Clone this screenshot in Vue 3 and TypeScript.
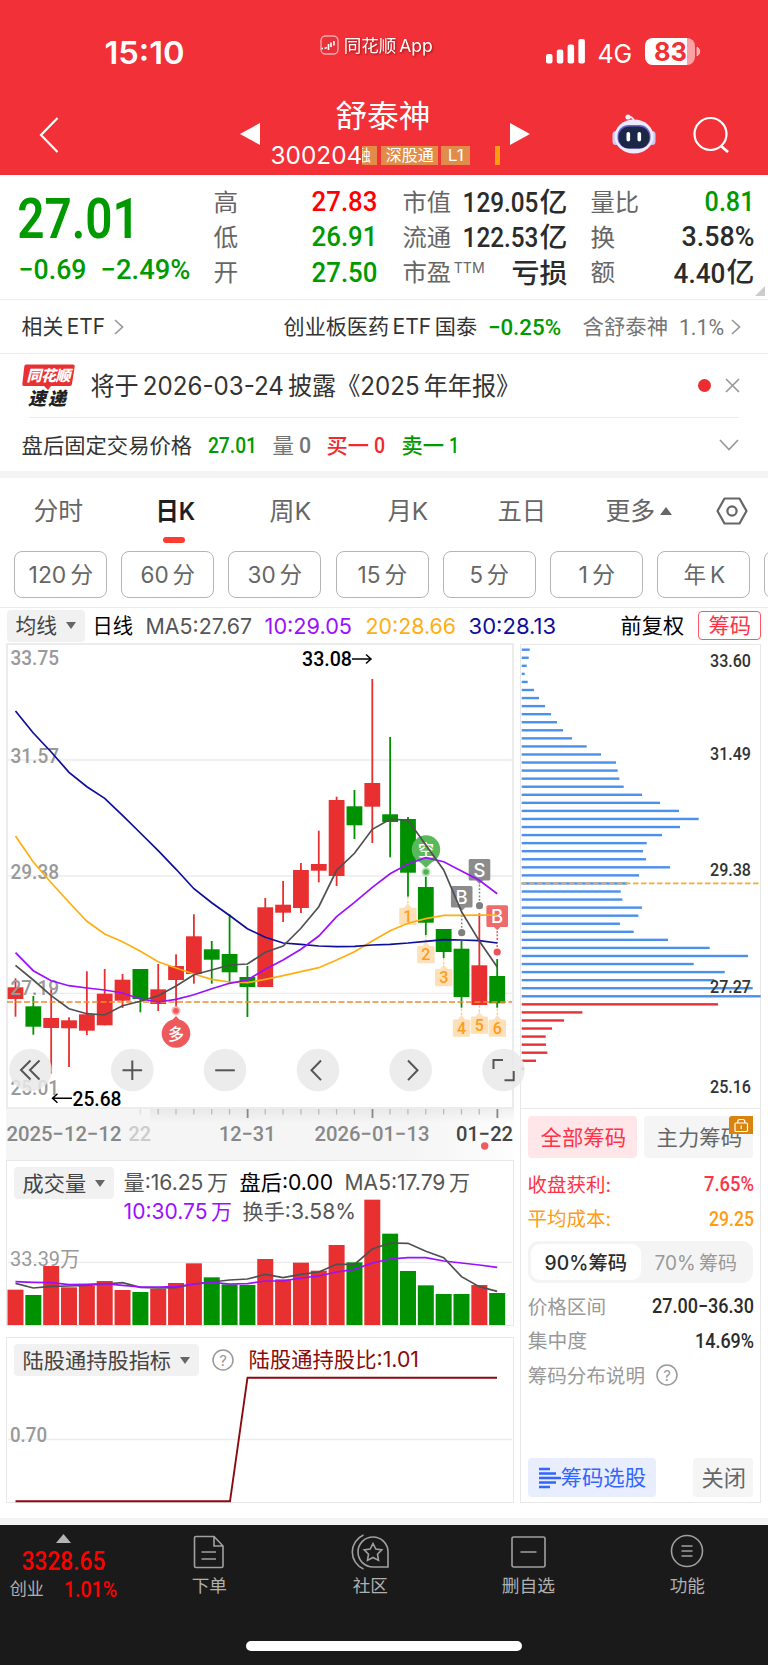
<script setup lang="ts">
import { h, type FunctionalComponent } from 'vue'

interface LabelProps {
  t: string
  w: number
  s: number
  g?: number
  wt?: number
  din?: boolean
  sp?: boolean
  dy?: number
}

/* Splits a label where Han characters meet Latin letters or digits. */
const splitScripts = (t: string): string[] =>
  t.split(/(?<=[\u4e00-\u9fff])(?=[A-Za-z0-9])|(?<=[A-Za-z0-9%])(?=[\u4e00-\u9fff])/)

/* Single-line label fitted to a fixed ink width; `g` is the leading gap. */
const T: FunctionalComponent<LabelProps> = (p) => {
  const gap = p.g ?? 0
  const lead = p.s * (p.din ? 0.05 : 0.02)
  const tail = p.s * 0.05
  const height = Math.round(p.s * 1.3)
  const parts = p.sp ? splitScripts(p.t) : [p.t]
  return h('svg', { width: gap + p.w, height, overflow: 'visible' }, [
    h(
      'text',
      {
        x: gap - lead,
        y: height / 2 + p.s * 0.365 + (p.dy ?? 0),
        textLength: p.w + lead + tail,
        lengthAdjust: 'spacingAndGlyphs',
        'font-size': p.s,
        'font-weight': p.wt ?? (p.din ? 500 : 400),
        'font-family': p.din
          ? 'Roboto, "Noto Sans CJK SC", sans-serif'
          : 'Inter, "Noto Sans CJK SC", sans-serif',
        fill: 'currentColor',
      },
      parts.length > 1
        ? parts.map((part, i) => h('tspan', i ? { dx: p.s * 0.17 } : {}, part))
        : p.t,
    ),
  ])
}
T.props = { t: String, w: Number, s: Number, g: Number, wt: Number, din: Boolean, sp: Boolean, dy: Number } as any

const RED = '#e83030'
const GREEN = '#009100'
const cx = (i: number): number => 15.5 + 17.84 * i

type Candle = [up: number, top: number, bottom: number, high: number, low: number]
const candles: Candle[] = [
  [1, 987.3, 999, 978.3, 1016.7],
  [0, 1006.3, 1026.7, 996, 1034.7],
  [1, 1018, 1028, 989.3, 1073.7],
  [1, 1020.3, 1028.3, 1017.3, 1067],
  [1, 1014.3, 1030.7, 971.3, 1035],
  [1, 993.7, 1025.3, 969, 1025.3],
  [1, 979.7, 1000.7, 974, 1008],
  [0, 969, 999, 969, 1012.3],
  [1, 989.3, 1004, 964, 1011],
  [1, 966, 980, 954.3, 1007.3],
  [1, 936.3, 974, 914.3, 983.7],
  [0, 949.3, 959.7, 941, 983.7],
  [0, 954, 972.3, 914.3, 982.7],
  [0, 977, 987, 966, 1017],
  [1, 907.3, 987, 898, 987],
  [1, 904.7, 912.7, 881, 922],
  [1, 870, 908, 863, 913],
  [1, 864, 870.7, 830.7, 882.3],
  [1, 800, 876, 796.7, 886],
  [0, 806.3, 825.3, 790, 839],
  [1, 783, 806.7, 679, 843],
  [0, 814.3, 822, 737, 857.3],
  [0, 819, 872.7, 817, 896.7],
  [0, 887, 922.7, 876.7, 935],
  [0, 929, 952, 929, 958],
  [0, 948.7, 997, 940.7, 1007.7],
  [1, 965.3, 1005, 913.3, 1005],
  [0, 976, 1003.3, 959, 1007.7],
]

const line = (ys: number[]): string => ys.map((y, i) => `${cx(i).toFixed(1)},${y}`).join(' ')

const averages = [
  {
    color: '#ffae12',
    pts: line([836, 862, 882.7, 902.3, 921.3, 934, 941.7, 951.3, 961.7, 968, 974, 979.3, 982, 982.7, 979.3, 975.7, 971.7, 967.7, 960, 951.7, 941, 930.7, 923.3, 918.7, 915.3, 915.3, 915.2, 915]),
  },
  {
    color: '#0e0e9c',
    pts: line([711, 733, 752, 772.3, 786.7, 798.3, 815.3, 833, 850.7, 869.3, 888.7, 902.7, 915.5, 928.7, 937.3, 943, 944.3, 946, 946.7, 946.3, 945, 944.3, 943, 941.3, 939.7, 940, 940.7, 943]),
  },
  {
    color: '#9a10ff',
    pts: line([952.7, 970.7, 980.7, 985.7, 988, 990, 993, 999, 1002, 999.3, 994.7, 988.7, 983.3, 980, 969.3, 960, 949.3, 936, 916.7, 902.3, 887.3, 873.7, 864, 857.7, 861.7, 871, 880.3, 893.7]),
  },
  {
    color: '#505050',
    pts: line([965.3, 980, 995.7, 1008.7, 1013.7, 1015, 1005.7, 1001.3, 995.7, 986, 974.7, 970, 965, 964, 952.3, 946, 928.3, 906.7, 870.3, 853.3, 829.3, 819.3, 820, 845, 870, 911.7, 941, 967]),
  },
]

const priceLabels = [
  { t: '33.75', y: 664.5 },
  { t: '31.57', y: 762.7 },
  { t: '29.38', y: 879.3 },
  { t: '27.19', y: 995.3 },
  { t: '25.01', y: 1094.5 },
]

const countTags = [
  { n: 1, x: 407.9, y: 907.7 },
  { n: 2, x: 425.9, y: 946 },
  { n: 3, x: 443.7, y: 969 },
  { n: 4, x: 461.5, y: 1019.5 },
  { n: 5, x: 479.4, y: 1016.5 },
  { n: 6, x: 497.3, y: 1019.5 },
]

const tradeTags = [
  { t: 'S', x: 479.5, y: 859, dot: 905.7, color: '#8c8c8c', dark: '#808080' },
  { t: 'B', x: 461.7, y: 886, dot: 932.7, color: '#8c8c8c', dark: '#808080' },
  { t: 'B', x: 497.2, y: 905.3, dot: 952, color: '#f06a6c', dark: '#ee5056' },
]

const controls = [
  { x: 30.5, d: 'M30.5 1060.5l-9.5 9.5l9.5 9.5M39.5 1060.5l-9.5 9.5l9.5 9.5' },
  { x: 132.3, d: 'M122.5 1070.3h19.6M132.3 1060.5v19.6' },
  { x: 225, d: 'M215.2 1070.3h19.6' },
  { x: 318, d: 'M321 1060.5l-9.5 9.8l9.5 9.8' },
  { x: 410.7, d: 'M408 1060.5l9.5 9.8l-9.5 9.8' },
  { x: 503.5, d: 'M493.5 1069v-9h9.5M504.500 1080.200h9.200v-9.200' },
]

const ticks = Array.from({ length: 21 }, (_, k) => k + 7)

const volY = (v: number): number => 1150 + v / 3
const volumes = [419, 435, 348, 412, 407, 393, 420, 426, 416, 399, 340, 382, 403, 405, 327, 388, 338, 362, 285, 337, 149, 251, 363, 406, 432, 432, 405, 429].map(volY)
const vol5 = line([400, 414, 409, 408, 406, 402, 398, 412, 414, 413, 402, 396, 390, 387, 373, 383, 373, 366, 343, 343, 297, 279, 280, 304, 323, 380, 410, 424].map(volY))
const vol10 = line([395, 397, 398, 404, 403, 401, 406, 411, 411, 410, 402, 397, 402, 401, 393, 393, 384, 378, 366, 358, 339, 327, 323, 323, 333, 339, 345, 352].map(volY))

const chips = [
  449, 446, 440, 434, 443, 462, 477, 495, 513, 531, 549, 576, 620, 663, 708, 713, 718, 731, 786, 840, 897, 956, 900, 846, 800,
  789, 798, 870, 777, 742, 722, 727, 786, 775, 720, 761, 864, 989, 1104, 941, 1034, 1003, 1118, 1142, 1014, 607, 552, 516, 497,
  498, 502, 468, 432,
].map((end, i) => ({ y: 649.7 + 8.06 * i, w: (end - 425) / 3, color: i < 44 ? '#4a90ec' : '#e83038' }))

const chipLabels = [
  { t: '33.60', y: 667 },
  { t: '31.49', y: 760.3 },
  { t: '29.38', y: 876.4 },
  { t: '27.27', y: 992.8 },
  { t: '25.16', y: 1093 },
]

const periods = [
  { t: '120分', w: 63 },
  { t: '60分', w: 53 },
  { t: '30分', w: 53 },
  { t: '15分', w: 48 },
  { t: '5分', w: 38 },
  { t: '1分', w: 35 },
  { t: '年K', w: 40 },
]
</script>

<template>
  <div class="page">
    <header class="top">
      <div class="status">
        <div class="clock"><T t="15:10" :w="78" :s="31.500" :wt="600" /></div>
        <div class="brand">
          <svg width="19" height="20" viewBox="0 0 19 20">
            <rect x="1" y="1" width="17" height="18" rx="4.500" fill="#e8323a" stroke="#fff" stroke-opacity=".6" stroke-width="1.300" />
            <path d="M1.500 13.500h1.500M4.500 13.500l2.500-1M8.500 9v6M11 12v-4.500M14 6v4.500" stroke="#fff" stroke-width="1.600" fill="none" />
          </svg>
          <T class="soft" t="同花顺App" :w="88" :s="17.500" :g="5" sp />
        </div>
        <div class="signal">
          <svg width="39" height="25" viewBox="0 0 39 25" fill="#fff">
            <rect x="0" y="15" width="6.500" height="9.500" rx="2" />
            <rect x="10.800" y="10.500" width="6.500" height="14" rx="2" />
            <rect x="21.600" y="5.500" width="6.500" height="19" rx="2" />
            <rect x="32.400" y="0" width="6.500" height="24.500" rx="2" />
          </svg>
          <T t="4G" :w="33" :s="26" :g="13" :dy="2" />
          <svg class="battery" width="56" height="27" viewBox="0 0 56 27">
            <rect width="50" height="27" rx="8" fill="#fff" fill-opacity=".55" />
            <path d="M8 0H42V27H8A8 8 0 0 1 0 19V8A8 8 0 0 1 8 0Z" fill="#fff" />
            <path d="M52 9a5 5 0 0 1 0 9z" fill="#fff" fill-opacity=".55" stroke="#fff" stroke-opacity=".5" />
            <text x="9" y="22.500" textLength="33" lengthAdjust="spacingAndGlyphs" font-family="Inter, sans-serif" font-weight="700" font-size="25" fill="#f23037">83</text>
          </svg>
        </div>
      </div>
      <div class="nav">
        <svg class="back" width="20" height="36" viewBox="0 0 20 36"><path d="M18.500 1L2 18L18.500 35" fill="none" stroke="#fff" stroke-width="2.200" /></svg>
        <svg class="prev" width="20" height="22" viewBox="0 0 20 22"><path d="M20 0V22L0 11z" fill="#fff" /></svg>
        <div class="name">
          <T class="title" t="舒泰神" :w="93" :s="31" />
          <div class="tags">
            <T t="300204" :w="90" :s="24" />
            <span class="tag half"><T t="融" :w="15" :s="15.500" /></span>
            <span class="tag"><T t="深股通" :w="47" :s="16" /></span>
            <span class="tag"><T t="L1" :w="15" :s="15.500" /></span>
            <i class="mark"></i>
          </div>
        </div>
        <svg class="next" width="20" height="22" viewBox="0 0 20 22"><path d="M0 0V22L20 11z" fill="#fff" /></svg>
        <svg class="robot" width="44" height="40" viewBox="0 0 44 40">
          <path d="M15 3.500q6-2 7 4" fill="none" stroke="#e8e8fa" stroke-width="1.800" />
          <circle cx="16" cy="3" r="2.600" fill="#f4f3ff" />
          <rect x="0.500" y="17" width="7" height="14" rx="3.500" fill="#c9cdf4" />
          <rect x="36.500" y="17" width="7" height="14" rx="3.500" fill="#c9cdf4" />
          <ellipse cx="22" cy="22.500" rx="19.500" ry="17" fill="#eceafc" />
          <rect x="5.500" y="11" width="33" height="23.500" rx="11" fill="#6c63c9" />
          <rect x="6.500" y="12.500" width="31" height="22" rx="10.500" fill="#1c2748" />
          <rect x="14.500" y="18" width="3.600" height="9.500" rx="1.800" fill="#fff" />
          <rect x="25.500" y="18" width="3.600" height="9.500" rx="1.800" fill="#fff" />
        </svg>
        <svg class="search" width="37" height="38" viewBox="0 0 37 38"><g fill="none" stroke="#fff" stroke-width="2.200"><circle cx="17.500" cy="18" r="16" /><path d="M28 30l7 6" stroke-width="2.800" /></g></svg>
      </div>
    </header>

    <section class="quote">
      <div class="price green">
        <T t="27.01" :w="117" :s="55" :wt="600" :dy="-0.5" din />
        <div class="delta">
          <T t="−0.69" :w="65" :s="28" din />
          <T t="−2.49%" :w="87" :s="28" :g="17" din />
        </div>
      </div>
      <div class="cell c1">
        <p><T t="高" :w="23" :s="23.500" /><T class="up" t="27.83" :w="63" :s="28" :dy="-1.5" din /></p>
        <p><T t="低" :w="23" :s="23.500" /><T class="green" t="26.91" :w="63" :s="28" :dy="-1.5" din /></p>
        <p><T t="开" :w="23" :s="23.500" /><T class="green" t="27.50" :w="63" :s="28" :dy="-1.5" din /></p>
      </div>
      <div class="cell c2">
        <p><T t="市值" :w="47" :s="23.500" /><span class="ink"><T t="129.05" :w="73" :s="28" :dy="-.5" din /><T t="亿" :w="26" :s="27" :g="3" :wt="500" /></span></p>
        <p><T t="流通" :w="47" :s="23.500" /><span class="ink"><T t="122.53" :w="73" :s="28" :dy="-.5" din /><T t="亿" :w="26" :s="27" :g="3" :wt="500" /></span></p>
        <p><span><T t="市盈" :w="47" :s="23.500" /><T t="TTM" :w="30" :s="14.500" :g="4" :dy="-5" /></span><T class="ink" t="亏损" :w="54" :s="27.500" :wt="500" /></p>
      </div>
      <div class="cell c3">
        <p><T t="量比" :w="47" :s="23.500" /><T class="green" t="0.81" :w="47" :s="28" :dy="-1.5" din /></p>
        <p><T t="换" :w="23" :s="23.500" /><T class="ink" t="3.58%" :w="70" :s="28" :dy="-1.5" din /></p>
        <p><T t="额" :w="23" :s="23.500" /><span class="ink"><T t="4.40" :w="49" :s="28" :dy="-.5" din /><T t="亿" :w="26" :s="27" :g="3" :wt="500" /></span></p>
      </div>
      <svg class="corner" width="10" height="10" viewBox="0 0 10 10"><path d="M10 0V10H0z" fill="#ccc" /></svg>
    </section>

    <section class="etf">
      <div>
        <T t="相关ETF" :w="82" :s="21" sp />
        <svg class="chev" width="10" height="16" viewBox="0 0 10 16"><path d="M1 1l7.500 7L1 15" /></svg>
      </div>
      <div>
        <T t="创业板医药ETF国泰" :w="192" :s="21" sp />
        <T class="green" t="−0.25%" :w="71" :s="22" :g="13" din />
        <T class="dim" t="含舒泰神" :w="84" :s="21" :g="23" />
        <T class="dim" t="1.1%" :w="43" :s="22" :g="13" din :wt="400" />
        <svg class="chev last" width="10" height="16" viewBox="0 0 10 16"><path d="M1 1l7.500 7L1 15" /></svg>
      </div>
    </section>

    <section class="notice">
      <div class="row">
        <svg width="54" height="44" viewBox="0 0 54 44" font-family="'Noto Sans CJK SC', sans-serif" font-weight="900" font-style="italic">
          <path d="M4 0.500H51q2 0 1.700 2L50 20q-.3 2-2.300 2H29l-3 4l-4-4H2q-2 0-1.700-2L2.300 2.500Q2.500.500 4 .5z" fill="#ea3032" />
          <text x="4.500" y="16.800" textLength="44" font-size="15" fill="#fff">同花顺</text>
          <text x="6" y="41" textLength="38" font-size="18" fill="#222">速递</text>
        </svg>
        <T t="将于2026-03-24披露《2025年年报》" :w="428" :s="25" :g="15" sp />
        <span class="dot"></span>
        <svg class="close" width="15" height="15" viewBox="0 0 15 15"><path d="M1 1L14 14M14 1L1 14" stroke="#999" stroke-width="1.700" /></svg>
      </div>
    </section>

    <section class="after">
      <T t="盘后固定交易价格" :w="169" :s="21" />
      <T class="green" t="27.01" :w="47" :s="21.500" :g="18" din />
      <T class="dim" t="量" :w="20" :s="21" :g="17" />
      <T class="dim" t="0" :w="10" :s="21.500" :g="7" din />
      <T class="rd" t="买一" :w="41" :s="21" :g="17" :wt="500" />
      <T class="rd" t="0" :w="9" :s="21.500" :g="7" din />
      <T class="green" t="卖一" :w="41" :s="21" :g="18" :wt="500" />
      <T class="green" t="1" :w="8" :s="21.500" :g="7" din />
      <svg class="down" width="20" height="12" viewBox="0 0 20 12"><path d="M1 1l9 9.500l9-9.500" fill="none" stroke="#999" stroke-width="1.700" /></svg>
    </section>

    <nav class="tabs">
      <T t="分时" :w="48" :s="24.500" :g="34" />
      <span class="on"><T t="日K" :w="38" :s="24.500" :g="74" :wt="600" /></span>
      <T t="周K" :w="40" :s="24.500" :g="76" />
      <T t="月K" :w="39" :s="24.500" :g="78" />
      <T t="五日" :w="47" :s="24.500" :g="71" />
      <T t="更多" :w="48" :s="24.500" :g="61" />
      <svg class="tri" width="12" height="8" viewBox="0 0 12 8"><path d="M0 8L6 0L12 8z" fill="#666" /></svg>
      <svg class="hex" width="32" height="28" viewBox="0 0 32 28"><g fill="none" stroke="#666" stroke-width="2.200"><path d="M8.500 1.500H23.500L30.500 14L23.500 26.500H8.500L1.500 14z" stroke-linejoin="round" /><circle cx="16" cy="14" r="4.600" /></g></svg>
    </nav>

    <div class="periods">
      <span v-for="p in periods" :key="p.t"><T :t="p.t" :w="p.w" :s="22.500" sp /></span>
      <span></span>
    </div>

    <div class="ma">
      <div class="chip"><T t="均线" :w="40" :s="21" /><i></i></div>
      <T class="blk" t="日线" :w="39" :s="21" :g="8" />
      <T t="MA5:27.67" :w="105" :s="21.500" :g="14" />
      <T class="c10" t="10:29.05" :w="86" :s="21.500" :g="14" />
      <T class="c20" t="20:28.66" :w="89" :s="21.500" :g="15" />
      <T class="c30" t="30:28.13" :w="86" :s="21.500" :g="14" />
      <T class="blk fq" t="前复权" :w="62" :s="21" />
      <span class="cm"><T t="筹码" :w="41" :s="21" /></span>
    </div>

    <main class="body">
      <div class="left">
        <svg class="kline" width="508" height="466" viewBox="6 643 508 466">
          <rect x="7" y="644" width="506" height="464" fill="#fff" stroke="#e8e8e8" stroke-width="1.600" />
          <path d="M8 760H512M8 876H512M8 993.300H512" stroke="#ececec" stroke-width="1.300" />
          <g v-for="(c, i) in candles" :key="i" :fill="c[0] ? RED : GREEN">
            <rect :x="cx(i) - 0.9" :y="c[3]" width="1.800" :height="c[4] - c[3]" />
            <rect :x="cx(i) - 7.9" :y="c[1]" width="15.800" :height="c[2] - c[1]" />
          </g>
          <path d="M7 1002H512" stroke="#f28a2a" stroke-width="1.700" stroke-dasharray="6 2.500" />
          <g font-family="Roboto, sans-serif" font-size="21" fill="#999" font-weight="500">
            <text v-for="l in priceLabels" :key="l.t" x="10.500" :y="l.y" textLength="48.500" lengthAdjust="spacingAndGlyphs">{{ l.t }}</text>
          </g>
          <g font-family="Roboto, sans-serif" font-size="21" fill="#000" font-weight="500">
            <text x="302" y="666.300" textLength="50" lengthAdjust="spacingAndGlyphs">33.08</text>
            <text x="72.500" y="1105.500" textLength="49" lengthAdjust="spacingAndGlyphs">25.68</text>
          </g>
          <path d="M352 659H370.500M366 654.500l5 4.500l-5 4.500M72 1098.300H53.500M57.500 1093.800l-5 4.500l5 4.500" fill="none" stroke="#000" stroke-width="1.500" />

          <g>
            <path d="M171 1021.500L176 1016L181 1021.500z" fill="#ee5a5c" />
            <circle cx="176" cy="1033.500" r="14.300" fill="#ee5a5c" />
            <circle cx="176" cy="1010.800" r="4.600" fill="#f7b4b4" /><circle cx="176" cy="1010.800" r="2.800" fill="#ee5a5c" />
            <text x="168" y="1039.500" font-family="'Noto Sans CJK SC', sans-serif" font-size="16" font-weight="500" fill="#fff">多</text>
          </g>
          <g>
            <path d="M418 860L426 868L434 860z" fill="#5ab95a" />
            <circle cx="426" cy="849.500" r="14.200" fill="#5ab95a" />
            <circle cx="426" cy="872" r="4.600" fill="#b8e0b8" /><circle cx="426" cy="872" r="2.800" fill="#4fb04f" />
            <text x="418" y="855.500" font-family="'Noto Sans CJK SC', sans-serif" font-size="16" font-weight="500" fill="#fff">空</text>
          </g>
          <g v-for="c in countTags" :key="c.n">
            <path :d="`M${c.x} ${c.y - 11}v8`" stroke="#fbc98a" stroke-width="1.300" stroke-dasharray="2.500 1.500" />
            <path :d="`M${c.x - 4} ${c.y + 0.5}l4 -5l4 5z`" fill="#fddfb8" />
            <rect :x="c.x - 8.7" :y="c.y" width="17.400" height="17.300" rx="1.500" fill="#fddfb8" />
            <text :x="c.x" :y="c.y + 14.300" text-anchor="middle" font-family="Roboto, sans-serif" font-weight="500" font-size="16" fill="#ff9c1a">{{ c.n }}</text>
          </g>
          <g v-for="m in tradeTags" :key="m.dot">
            <path :d="`M${m.x} ${m.y + 22}V${m.dot}`" :stroke="m.dark" stroke-width="1.500" stroke-dasharray="1.800 1.800" />
            <path :d="`M${m.x - 4} ${m.y + 21}h8l-4 4z`" :fill="m.color" />
            <rect :x="m.x - 10.8" :y="m.y" width="21.600" height="21.600" rx="1.500" :fill="m.color" />
            <circle :cx="m.x" :cy="m.dot" r="3.600" :fill="m.dark" />
            <text :x="m.x" :y="m.y + 17.5" text-anchor="middle" font-family="Inter, sans-serif" font-weight="500" font-size="18.500" fill="#fff">{{ m.t }}</text>
          </g>
          <polyline v-for="a in averages" :key="a.color" :points="a.pts" fill="none" :stroke="a.color" stroke-width="1.700" />
          <g v-for="c in controls" :key="c.x">
            <circle :cx="c.x" cy="1070" r="21.300" fill="#e9e9e9" fill-opacity=".85" />
            <path :d="c.d" fill="none" stroke="#555" stroke-width="2" />
          </g>
        </svg>

        <svg class="axis" width="508" height="51" viewBox="6 1109 508 51">
          <defs>
            <linearGradient id="strip" x1="0" x2="1">
              <stop offset="0" stop-color="#f5f5f5" /><stop offset=".8" stop-color="#f5f5f5" /><stop offset="1" stop-color="#fdfdfd" />
            </linearGradient>
            <linearGradient id="shade" x1="0" x2="0" y1="0" y2="1">
              <stop offset="0" stop-color="#000" stop-opacity=".05" /><stop offset="1" stop-color="#000" stop-opacity="0" />
            </linearGradient>
          </defs>
          <rect x="6" y="1109" width="508" height="51" fill="url(#strip)" />
          <rect x="150" y="1109" width="364" height="14" fill="url(#shade)" />
          <rect v-for="i in ticks" :key="i" :x="cx(i) - 0.7" y="1109" :width="i % 7 === 6 ? 1.8 : 1.3" :height="i % 7 === 6 ? 9 : 5.5" :fill="i === 7 ? '#ddd' : i % 7 === 6 ? '#888' : '#bbb'" />
          <g font-family="Roboto, sans-serif" font-size="21" font-weight="500" fill="#888">
            <text x="6.500" y="1140.500" textLength="115" lengthAdjust="spacingAndGlyphs">2025−12−12</text>
            <text x="128.500" y="1140.500" textLength="22.500" lengthAdjust="spacingAndGlyphs" fill="#ccc">22</text>
            <text x="219" y="1140.500" textLength="56.500" lengthAdjust="spacingAndGlyphs">12−31</text>
            <text x="314.500" y="1140.500" textLength="115" lengthAdjust="spacingAndGlyphs">2026−01−13</text>
            <text x="456" y="1140.500" textLength="57" lengthAdjust="spacingAndGlyphs" fill="#444">01−22</text>
          </g>
          <circle cx="484.700" cy="1146" r="3.700" fill="#f05a5c" />
        </svg>

        <div class="panel vol">
          <div class="chip"><T t="成交量" :w="62" :s="21" /><i></i></div>
          <div class="lines">
            <div><T t="量:16.25万" :w="103" :s="21" :g="10" sp /><T class="blk" t="盘后:0.00" :w="92" :s="21" :g="13" /><T t="MA5:17.79万" :w="124" :s="21" :g="13" sp /></div>
            <div><T class="c10" t="10:30.75万" :w="107" :s="21" :g="10" sp /><T t="换手:3.58%" :w="112" :s="21" :g="12" /></div>
          </div>
          <svg class="plot" width="508" height="166" viewBox="6 1160 508 166">
            <path d="M8 1262.300H512" stroke="#ececec" stroke-width="1.300" />
            <text x="10" y="1265.500" textLength="70" lengthAdjust="spacingAndGlyphs" font-family="Roboto, 'Noto Sans CJK SC', sans-serif" font-size="21" fill="#999">33.39万</text>
            <rect v-for="(v, i) in volumes" :key="i" :x="cx(i) - 8" :y="v" width="16" :height="1325 - v" :fill="candles[i][0] ? RED : GREEN" />
            <polyline :points="vol5" fill="none" stroke="#505050" stroke-width="1.700" />
            <polyline :points="vol10" fill="none" stroke="#9a10ff" stroke-width="1.700" />
          </svg>
        </div>

        <div class="panel hold">
          <div class="chip"><T t="陆股通持股指标" :w="147" :s="21" /><i></i></div>
          <svg class="help" width="22" height="22" viewBox="0 0 22 22"><circle cx="11" cy="11" r="10" fill="none" stroke="#999" stroke-width="1.500" /><text x="11" y="16.500" text-anchor="middle" font-family="Inter, sans-serif" font-size="15" fill="#999">?</text></svg>
          <T class="maroon" t="陆股通持股比:1.01" :w="169" :s="21" :g="15" />
          <svg class="plot" width="508" height="166" viewBox="6 1337 508 166">
            <path d="M8 1439.500H512" stroke="#ececec" stroke-width="1.300" />
            <text x="10" y="1442.300" textLength="37" lengthAdjust="spacingAndGlyphs" font-family="Roboto, sans-serif" font-size="21" font-weight="500" fill="#999">0.70</text>
            <path d="M15.500 1501.300H230L247.500 1377.700H497" fill="none" stroke="#8b0a0c" stroke-width="1.900" />
          </svg>
        </div>
      </div>

      <aside class="right">
        <svg class="chips" width="241" height="465" viewBox="520 644 241 465">
          <rect v-for="(c, i) in chips" :key="i" x="521.700" :y="c.y - 1.2" :width="c.w" height="2.400" :fill="c.color" />
          <path d="M521 883.300H760" stroke="#ffa928" stroke-width="1.700" stroke-dasharray="5.500 2.500" />
          <g font-family="Roboto, sans-serif" font-size="18" font-weight="500" fill="#333">
            <text v-for="l in chipLabels" :key="l.t" x="710" :y="l.y" textLength="41" lengthAdjust="spacingAndGlyphs">{{ l.t }}</text>
          </g>
        </svg>
        <div class="info">
          <div class="pair">
            <span class="sel all"><T t="全部筹码" :w="84" :s="21" /></span>
            <span class="sel"><T t="主力筹码" :w="84" :s="21" />
              <svg class="lock" width="24" height="18" viewBox="0 0 24 18"><path d="M3 0H24V18H0V3q0-3 3-3z" fill="#d9840e" /><g fill="none" stroke="#fff" stroke-width="1.200"><rect x="6" y="7" width="12.500" height="8.500" rx="1" /><path d="M8.800 7V5.500q0-2 2-2h3q2 0 2 2V7M12.200 9.500v3.500" /></g></svg>
            </span>
          </div>
          <p class="r"><T t="收盘获利:" :w="82" :s="19.500" /><T t="7.65%" :w="48" :s="20" din /></p>
          <p class="o"><T t="平均成本:" :w="82" :s="19.500" /><T t="29.25" :w="43" :s="20" din /></p>
          <div class="seg"><b><T t="90%筹码" :w="81" :s="19.500" :wt="500" /></b><span><T t="70%筹码" :w="81" :s="19.500" sp /></span></div>
          <p><T t="价格区间" :w="77" :s="19.500" /><T class="ink" t="27.00−36.30" :w="100" :s="20" din /></p>
          <p><T t="集中度" :w="58" :s="19.500" /><T class="ink" t="14.69%" :w="57" :s="20" din /></p>
          <p class="say"><T t="筹码分布说明" :w="116" :s="19.500" /><svg class="help" width="22" height="22" viewBox="0 0 22 22"><circle cx="11" cy="11" r="10" fill="none" stroke="#999" stroke-width="1.500" /><text x="11" y="16.500" text-anchor="middle" font-family="Inter, sans-serif" font-size="15" fill="#999">?</text></svg></p>
          <div class="acts">
            <span class="pick"><svg width="22" height="22" viewBox="0 0 22 22" stroke="#3366ff" stroke-width="2.600"><path d="M0 2H11M0 6.500H17M0 11H22M0 15.500H17M0 20H11" /></svg><T t="筹码选股" :w="84" :s="21" /></span>
            <span class="shut"><T t="关闭" :w="43" :s="22" /></span>
          </div>
        </div>
      </aside>
    </main>

    <footer class="dock">
      <div class="items">
        <div class="index">
          <svg width="15" height="9" viewBox="0 0 15 9"><path d="M0 9L7.500 0L15 9z" fill="#b4b4b4" /></svg>
          <T t="3328.65" :w="81" :s="25" din />
          <div><T class="lt" t="创业" :w="33" :s="17" /><T t="1.01%" :w="51" :s="22" :g="22" :dy="-1" din /></div>
        </div>
        <div class="item i1">
          <svg width="32" height="34" viewBox="0 0 32 34"><path d="M3 1.500H21L30 11V31q0 1.500-1.500 1.500H3Q1.500 32.500 1.500 31V3Q1.500 1.500 3 1.500zM21 1.500V11H30M8.500 17H23M8.500 24H23" /></svg>
          <T t="下单" :w="34" :s="17.500" />
        </div>
        <div class="item i2">
          <svg width="37" height="36" viewBox="0 0 37 36"><path d="M21 3A15 15 0 0 0 21 33H36V18A15 15 0 0 0 21 3zM11.500 1A18.500 18.500 0 0 0 11.500 35M21 9.500l2.800 5.500l6 .9l-4.300 4.300l1 6.200L21 23.500l-5.500 2.900l1-6.200l-4.300-4.300l6-.9z" /></svg>
          <T t="社区" :w="34" :s="17.500" />
        </div>
        <div class="item i3">
          <svg width="35" height="32" viewBox="0 0 35 32"><path d="M3 1H32Q34 1 34 2.500V29Q34 31 32 31H3Q1 31 1 29V2.500Q1 1 3 1zM9.500 16H25.500" /></svg>
          <T t="删自选" :w="52" :s="17.500" />
        </div>
        <div class="item i4">
          <svg width="34" height="34" viewBox="0 0 34 34"><circle cx="17" cy="17" r="15.500" /><path d="M11.500 12H22.500M11.500 17H22.500M11.500 22H22.500" /></svg>
          <T t="功能" :w="34" :s="17.500" />
        </div>
      </div>
      <div class="home"></div>
    </footer>
  </div>
</template>

<style>
body {
  margin: 0;
}
</style>

<style scoped>
.page {
  width: 768px;
  height: 1665px;
  display: flex;
  flex-direction: column;
  overflow: hidden;
  background: #fff;
  color: #333;
  font-family: Inter, 'Noto Sans CJK SC', sans-serif;
}
.page svg {
  display: block;
  flex: none;
  overflow: visible;
}
.green { color: #009a00; }
.up { color: #ff0000; }
.rd { color: #f02a30; }
.ink { color: #2b2b2b; }
.dim { color: #757575; }
.blk { color: #000; }
.c10 { color: #9a10ff; }
.c20 { color: #ffae12; }
.c30 { color: #0e0e9c; }
.maroon { color: #8b0a0c; }

.top {
  height: 174.500px;
  box-sizing: border-box;
  background: #f23037;
  color: #fff;
}
.status {
  height: 96px;
  display: flex;
}
.clock { padding: 32px 0 0 105px; }
.brand {
  display: flex;
  align-items: center;
  height: 22px;
  padding: 34px 0 0 137px;
}
.soft { filter: drop-shadow(1px 1px 1px rgba(90, 0, 0, 0.6)); }
.signal {
  display: flex;
  align-items: center;
  height: 27px;
  padding: 38px 0 0 114px;
}
.battery { margin-left: 14px; }
.nav {
  display: flex;
  align-items: flex-start;
}
.back { margin: 21px 0 0 39px; }
.prev { margin: 27px 0 0 181px; }
.name {
  width: 250px;
  display: flex;
  flex-direction: column;
  align-items: flex-start;
}
.title { margin-left: 76px; }
.tags {
  display: flex;
  align-items: center;
  padding-left: 11px;
  height: 20px;
  margin-top: 9px;
}
.tag {
  display: flex;
  align-items: center;
  justify-content: center;
  height: 19px;
  padding: 0 5px;
  margin-right: 3.500px;
  background: #e28c49;
}
.tag.half {
  width: 8px;
  padding: 0 7px 0 0;
  margin-left: 1px;
  justify-content: flex-end;
  overflow: hidden;
}
.tag:nth-of-type(3) { padding: 0 7px; }
.mark {
  width: 5px;
  height: 19px;
  margin-left: 21px;
  background: #ff9c12;
}
.next { margin: 27px 0 0; }
.robot { margin: 18px 0 0 82px; }
.search { margin: 20px 0 0 37px; }

.quote {
  position: relative;
  display: flex;
  height: 125.500px;
  box-sizing: border-box;
  border-bottom: 1.500px solid #ececec;
  color: #666;
}
.price {
  width: 194px;
  padding: 7px 0 0 20px;
  display: flex;
  flex-direction: column;
}
.delta {
  display: flex;
  margin-top: -3px;
}
.cell {
  padding-top: 10px;
  display: flex;
  flex-direction: column;
}
.cell p {
  margin: 0;
  height: 35.300px;
  display: flex;
  align-items: center;
  justify-content: space-between;
}
.cell span { display: flex; align-items: center; }
.c1 { width: 162px; }
.c2 { width: 163px; margin-left: 27px; }
.c3 { width: 162px; margin-left: 25px; }
.corner {
  position: absolute;
  right: 3px;
  bottom: 3px;
}
.etf {
  height: 54px;
  box-sizing: border-box;
  padding: 0 27px 0 22px;
  display: flex;
  justify-content: space-between;
  align-items: center;
  border-bottom: 1.500px solid #ececec;
}
.etf div { display: flex; align-items: center; }
.chev {
  margin-left: 10px;
  fill: none;
  stroke: #999;
  stroke-width: 1.700;
}
.chev.last { margin-left: 8px; }

.notice .row {
  height: 63px;
  margin: 0 29px;
  border-bottom: 1.500px solid #ececec;
  display: flex;
  align-items: center;
}
.notice svg:first-child { margin-left: -7px; }
.dot {
  width: 13px;
  height: 13px;
  margin-left: auto;
  border-radius: 50%;
  background: #ec2c30;
}
.close { margin: 0 -1px 0 14px; }
.after {
  height: 53px;
  display: flex;
  align-items: center;
  padding: 1px 29px 0 22px;
  box-sizing: border-box;
}
.down { margin-left: auto; }
.tabs {
  border-top: 7.500px solid #f4f4f4;
  height: 66px;
  display: flex;
  align-items: center;
  color: #666;
}
.on {
  position: relative;
  color: #1f1f1f;
}
.on::after {
  content: '';
  position: absolute;
  right: 9px;
  bottom: -16px;
  width: 22px;
  height: 6px;
  border-radius: 3px;
  background: #ff3b30;
}
.tri { margin-left: 6px; }
.hex { margin-left: 44px; }
.periods {
  display: flex;
  gap: 14.200px;
  height: 64px;
  padding: 7px 0 0 14px;
  box-sizing: border-box;
  color: #666;
  overflow: hidden;
  border-bottom: 1.500px solid #ececec;
}
.periods span {
  flex: none;
  width: 93px;
  height: 47px;
  box-sizing: border-box;
  border: 1.500px solid #b5b5b5;
  border-radius: 8px;
  display: flex;
  align-items: center;
  justify-content: center;
}
.ma {
  height: 35px;
  display: flex;
  align-items: center;
  padding: 0 7px;
  color: #555;
}
.chip {
  display: flex;
  align-items: center;
  height: 32px;
  padding: 0 9px;
  background: #f1f1f1;
  border-radius: 4px;
  color: #444;
}
.chip i {
  margin-left: 10px;
  border: 5.500px solid transparent;
  border-top: 7px solid #666;
  border-bottom: 0;
}
.fq { margin-left: auto; }
.cm {
  margin-left: 15px;
  width: 61px;
  height: 27px;
  border: 1.500px solid #ff5566;
  border-radius: 4px;
  color: #ff3347;
  display: flex;
  align-items: center;
  justify-content: center;
}
.body {
  display: flex;
  padding-left: 6px;
  height: 875px;
}
.left {
  position: relative;
  z-index: 1;
  width: 508px;
  display: flex;
  flex-direction: column;
}
.kline {
  position: relative;
  z-index: 1;
}
.panel {
  position: relative;
  box-sizing: border-box;
  width: 508px;
  height: 166px;
  border: 1.500px solid #e8e8e8;
  display: flex;
  align-items: flex-start;
  padding: 6px 0 0 7px;
  color: #555;
}
.vol { flex: none; }
.hold { margin-top: 11px; }
.plot {
  position: absolute;
  left: -1px;
  top: -1px;
}
.lines > div {
  display: flex;
  height: 29px;
  align-items: center;
}
.lines { padding-top: 1px; }
.hold > .help { margin: 5px 0 0 13px; }
.hold .maroon { margin-top: 2px; }
.right {
  margin-left: 6px;
  width: 241px;
  height: 859px;
  box-sizing: border-box;
  border: 1px solid #e8e8e8;
  display: flex;
  flex-direction: column;
  margin-top: 1px;
}
.chips { margin: -1px; }
.info {
  flex: 1;
  border-top: 1px solid #e8e8e8;
  padding: 7px 7px 5px 7px;
  display: flex;
  flex-direction: column;
  color: #999;
}
.pair {
  display: flex;
  justify-content: space-between;
  margin-bottom: 9px;
}
.sel {
  position: relative;
  width: 109px;
  height: 42px;
  border-radius: 4px;
  background: #f5f5f5;
  color: #666;
  display: flex;
  align-items: center;
  justify-content: center;
}
.sel.all {
  background: #ffe6e8;
  color: #ff3347;
}
.lock {
  position: absolute;
  right: 0;
  top: 0;
}
.info p {
  margin: 0;
  height: 34.500px;
  display: flex;
  align-items: center;
  justify-content: space-between;
}
.info .r { color: #ff3347; }
.info .o { color: #ff9c12; }
.seg {
  height: 42px;
  box-sizing: border-box;
  margin: 5px 0 6px;
  padding: 3px;
  border-radius: 11px;
  background: #f4f4f4;
  display: flex;
  align-items: center;
}
.seg b, .seg span {
  width: 110px;
  height: 36px;
  border-radius: 9px;
  display: flex;
  align-items: center;
  justify-content: center;
}
.seg b {
  background: #fff;
  color: #2b2b2b;
}
.info .say { justify-content: flex-start; gap: 12px; }
.acts {
  margin-top: auto;
  display: flex;
  justify-content: space-between;
}
.acts span {
  height: 39px;
  border-radius: 4px;
  display: flex;
  align-items: center;
  justify-content: center;
}
.pick {
  width: 128px;
  background: #e9eeff;
  color: #3366ff;
}
.shut {
  width: 60px;
  background: #f5f5f5;
  color: #666;
}
.dock {
  flex: 1;
  border-top: 7px solid #f3f3f3;
  background: #1a1a1a;
  color: #b0b0b0;
  display: flex;
  flex-direction: column;
  align-items: center;
}
.items {
  width: 768px;
  height: 116px;
  display: flex;
}
.index {
  width: 126px;
  display: flex;
  flex-direction: column;
  align-items: center;
  padding-top: 9px;
  color: #f00;
}
.index > svg:nth-child(2) { margin-top: 1px; }
.index div { display: flex; align-items: center; height: 20px; margin-top: 2px; }
.lt { color: #b0b0b0; }
.item {
  width: 60px;
  display: flex;
  flex-direction: column;
  align-items: center;
  justify-content: flex-end;
  height: 72px;
}
.item svg:first-child {
  fill: none;
  stroke: #a0a0a0;
  stroke-width: 1.600;
  margin-bottom: 6px;
}
.i1 { margin-left: 53px; }
.i2 { margin-left: 101px; }
.i3 { margin-left: 98px; }
.i4 { margin-left: 99px; }
.item.i1 svg:first-child { margin-bottom: 5px; }
.item.i2 svg:first-child { margin-bottom: 4px; }
.home {
  width: 276px;
  height: 10px;
  border-radius: 5px;
  background: #fff;
}
</style>
